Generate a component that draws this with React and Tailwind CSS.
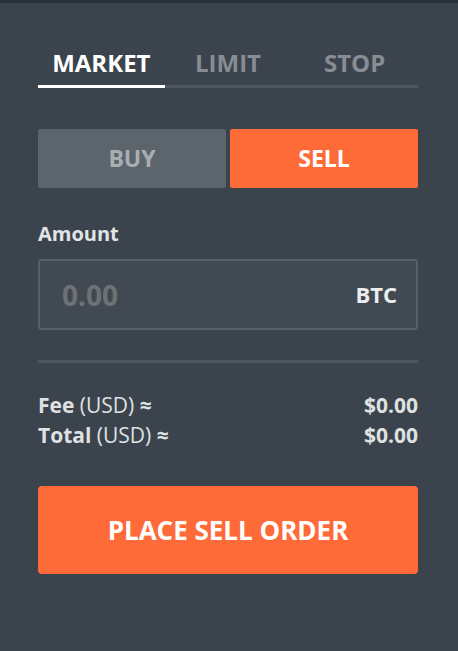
import { useState } from 'react';

export default function App() {
  const [tab, setTab] = useState('market');
  const [side, setSide] = useState('sell');

  const tabs = [
    { id: 'market', label: 'MARKET' },
    { id: 'limit', label: 'LIMIT' },
    { id: 'stop', label: 'STOP' },
  ];

  return (
    <div
      className="min-h-[651px] w-[458px] bg-[#3b444c] border-t-[3px] border-[#2a3239]"
      style={{ fontFamily: '"Open Sans", "Noto Sans", sans-serif' }}
    >
      <div className="pl-[38px] pr-[40px] pt-[44px]">
        {/* order type tabs */}
        <div className="grid grid-cols-3 border-b-[3px] border-[#4d565e]">
          {tabs.map((t) => (
            <button
              key={t.id}
              onClick={() => setTab(t.id)}
              className={
                tab === t.id
                  ? 'relative pb-[7px] text-[24px] font-bold leading-[31px] text-white'
                  : 'relative pb-[7px] text-[24px] font-bold leading-[31px] text-[#878d93]'
              }
            >
              {t.label}
              {tab === t.id && (
                <span className="absolute left-0 right-0 -bottom-[3px] h-[3px] bg-white" />
              )}
            </button>
          ))}
        </div>

        {/* buy / sell */}
        <div className="mt-[41px] grid grid-cols-2 gap-[4px]">
          <button
            onClick={() => setSide('buy')}
            className={
              side === 'buy'
                ? 'h-[59px] rounded-[2px] bg-[#ff6a39] text-[23px] font-bold text-white'
                : 'h-[59px] rounded-[2px] bg-[#5c646c] text-[23px] font-bold text-[#a9aeb3]'
            }
          >
            BUY
          </button>
          <button
            onClick={() => setSide('sell')}
            className={
              side === 'sell'
                ? 'h-[59px] rounded-[2px] bg-[#ff6a39] text-[23px] font-bold text-white'
                : 'h-[59px] rounded-[2px] bg-[#5c646c] text-[23px] font-bold text-[#a9aeb3]'
            }
          >
            SELL
          </button>
        </div>

        {/* amount */}
        <div className="mt-[34px] text-[20px] font-bold leading-[24px] text-[#e2e4e6]">Amount</div>
        <div className="mt-[13px] flex h-[71px] items-center justify-between rounded-[3px] border-2 border-[#565f67] bg-[#414a52] pl-[22px] pr-[19px]">
          <input
            placeholder="0.00"
            className="w-[200px] bg-transparent text-[28px] font-bold text-white placeholder:text-[#6f7274] outline-none"
          />
          <span className="text-[22px] font-bold text-[#eceeef]">BTC</span>
        </div>

        <div className="mt-[30px] h-[3px] bg-[#4d565e]" />

        {/* fee / total */}
        <div className="mt-[28px] space-y-[1px] text-[21px] leading-[29px] text-[#dfe1e3]">
          <div className="flex justify-between">
            <span>
              <span className="font-bold">Fee</span> <span className="font-normal">(USD)</span>{' '}
              <span className="font-bold">≈</span>
            </span>
            <span className="font-bold">$0.00</span>
          </div>
          <div className="flex justify-between">
            <span>
              <span className="font-bold">Total</span> <span className="font-normal">(USD)</span>{' '}
              <span className="font-bold">≈</span>
            </span>
            <span className="font-bold">$0.00</span>
          </div>
        </div>

        <button className="mt-[36px] h-[88px] w-full rounded-[4px] bg-[#ff6a39] text-[26px] font-bold text-white">
          PLACE SELL ORDER
        </button>
      </div>
    </div>
  );
}
